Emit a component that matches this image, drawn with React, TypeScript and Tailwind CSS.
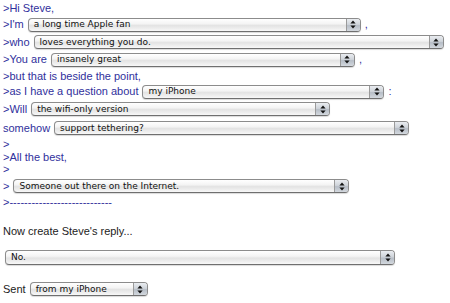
import React from "react";

// Aqua-style popup button
function Popup({ text, className }: { text: string; className: string }) {
  return (
    <div
      className={`flex h-[14px] shrink-0 items-stretch rounded-[4px] border border-[#8c8c8c] border-b-[#6f6f6f] bg-[linear-gradient(to_bottom,#ffffff_0%,#f4f4f4_40%,#e3e3e3_55%,#eeeeee_80%,#f8f8f8_100%)] shadow-[0_1px_1px_rgba(0,0,0,0.15)] ${className}`}
    >
      <span className="flex flex-1 items-center pl-[5px] font-['DejaVu_Sans',sans-serif] text-[9px] leading-none text-[#111]">
        {text}
      </span>
      <span className="flex w-[14px] items-center justify-center rounded-r-[3px] border-l border-[#9a9a9a] bg-[linear-gradient(to_bottom,#e9ecf0_0%,#cfd4da_45%,#b7bec7_55%,#d3d8de_100%)]">
        <svg width="6" height="9" viewBox="0 0 6 9">
          <polygon points="3,0.5 5.6,3.6 0.4,3.6" fill="#111" />
          <polygon points="0.4,5.4 5.6,5.4 3,8.5" fill="#111" />
        </svg>
      </span>
    </div>
  );
}

export default function App() {
  const blue = "text-[#30309c]";
  return (
    <div className="h-[303px] w-[450px] overflow-hidden bg-white pl-[3px] font-['Liberation_Sans',Arial,sans-serif] text-[11px] leading-none">
      <div className={`flex h-[16px] items-center ${blue}`}>&gt;Hi Steve,</div>

      <div className={`flex h-[17px] items-center gap-[4px] ${blue}`}>
        <span>&gt;I'm</span>
        <Popup text="a long time Apple fan" className="w-[333px]" />
        <span>,</span>
      </div>

      <div className={`flex h-[18px] items-center gap-[4px] ${blue}`}>
        <span>&gt;who</span>
        <Popup text="loves everything you do." className="w-[410px]" />
      </div>

      <div className={`flex h-[17px] items-center gap-[4px] ${blue}`}>
        <span>&gt;You are</span>
        <Popup text="insanely great" className="w-[304px]" />
        <span>,</span>
      </div>

      <div className={`flex h-[16px] items-center ${blue}`}>&gt;but that is beside the point,</div>

      <div className={`flex h-[15px] items-center gap-[4px] ${blue}`}>
        <span>&gt;as I have a question about</span>
        <Popup text="my iPhone" className="w-[242px]" />
        <span>:</span>
      </div>

      <div className={`flex h-[20px] items-center gap-[4px] ${blue}`}>
        <span>&gt;Will</span>
        <Popup text="the wifi-only version" className="w-[299px]" />
      </div>

      <div className={`flex h-[18px] items-center gap-[4px] ${blue}`}>
        <span>somehow</span>
        <Popup text="support tethering?" className="w-[355px]" />
      </div>

      <div className={`flex h-[14px] items-center ${blue}`}>&gt;</div>
      <div className={`flex h-[13px] items-center ${blue}`}>&gt;All the best,</div>
      <div className={`flex h-[10px] items-center ${blue}`}>&gt;</div>

      <div className={`flex h-[24px] items-center gap-[4px] ${blue}`}>
        <span>&gt;</span>
        <Popup text="Someone out there on the Internet." className="w-[336px]" />
      </div>

      <div className={`flex h-[8px] items-center ${blue}`}>&gt;----------------------------</div>

      <div className="mt-[16px] flex h-[18px] items-center text-[#222]">Now create Steve's reply...</div>

      <div className="mt-[9px] flex h-[16px] items-center pl-[2px]">
        <Popup text="No." className="!h-[15px] w-[390px]" />
      </div>

      <div className="mt-[16px] flex h-[16px] items-center gap-[4px] text-[#222]">
        <span>Sent</span>
        <Popup text="from my iPhone" className="w-[118px]" />
      </div>
    </div>
  );
}
